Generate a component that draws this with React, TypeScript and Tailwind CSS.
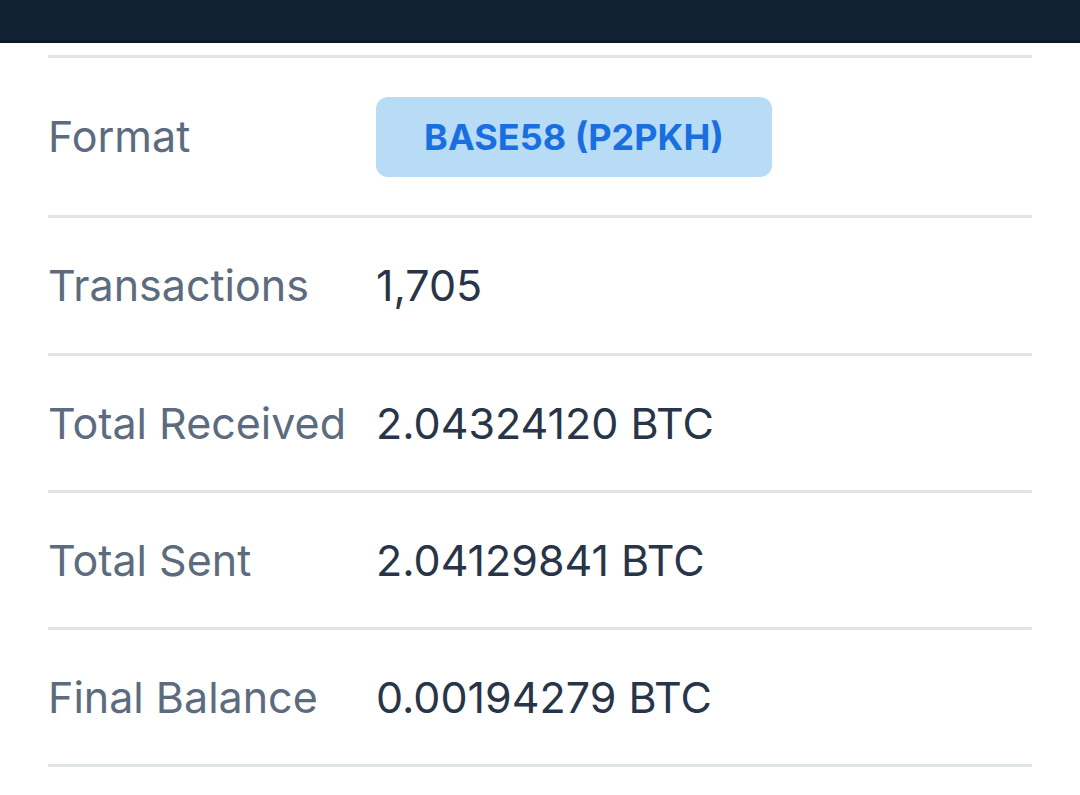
export default function App() {
  const rows: { label: string; value: string }[] = [
    { label: "Transactions", value: "1,705" },
    { label: "Total Received", value: "2.04324120 BTC" },
    { label: "Total Sent", value: "2.04129841 BTC" },
    { label: "Final Balance", value: "0.00194279 BTC" },
  ];
  return (
    <div className="w-[1080px] h-[795px] bg-white overflow-hidden" style={{ fontFamily: "Inter, 'Noto Sans', sans-serif" }}>
      <div className="h-[43px] bg-[#122033] border-b-[3px] border-[#0c1828]" />
      <div className="mx-[48px] mt-[12px] border-t-[3px] border-[#dfe4e7]">
        <div className="h-[160px] flex items-center border-b-[3px] border-[#dfe4e7]">
          <div className="w-[328px] text-[43px] text-[#5c6b7e]">Format</div>
          <div className="h-[80px] w-[396px] rounded-[12px] bg-[#b8dbf6] flex items-center justify-center text-[36px] font-bold text-[#1a6fe0]">
            BASE58 (P2PKH)
          </div>
        </div>
        {rows.map((r, i) => (
          <div key={r.label} className={`${i === 0 ? "h-[138px]" : "h-[137px]"} flex items-center border-b-[3px] border-[#dfe4e7]`}>
            <div className="w-[328px] text-[43px] text-[#5c6b7e]">{r.label}</div>
            <div className="text-[43px] text-[#283548]">{r.value}</div>
          </div>
        ))}
      </div>
    </div>
  );
}
